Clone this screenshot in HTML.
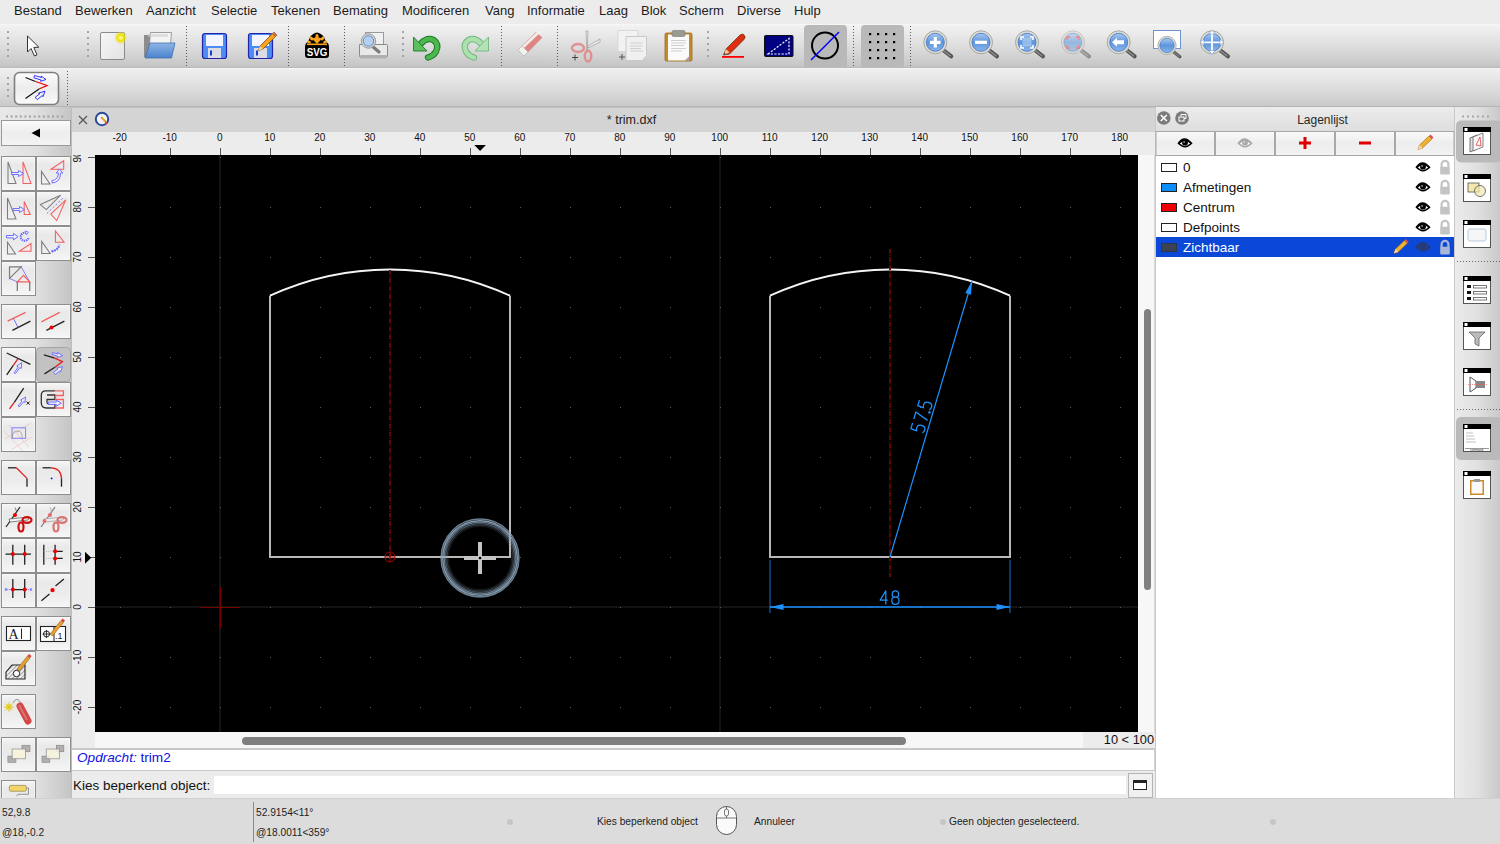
<!DOCTYPE html>
<html><head><meta charset="utf-8">
<style>
*{margin:0;padding:0;box-sizing:border-box}
html,body{width:1500px;height:844px;overflow:hidden;background:#e6e6e6;font-family:"Liberation Sans",sans-serif;color:#222}
.a{position:absolute}
#menu{left:0;top:0;width:1500px;height:24px;background:#ececec}
#menu span{position:absolute;top:3px;font-size:13px;color:#1c1c1c;line-height:16px}
#tb1{left:0;top:24px;width:1500px;height:44px;background:linear-gradient(#f2f2f2,#e6e6e6 30%,#d2d2d2 75%,#c4c4c4);border-top:1px solid #f6f6f6;border-bottom:1px solid #b9b9b9}
#tb2{left:0;top:68px;width:1500px;height:39px;background:linear-gradient(#efefef,#e5e5e5 30%,#d4d4d4 75%,#c9c9c9);border-top:1px solid #f5f5f5;border-bottom:1px solid #b4b4b4}
#left{left:0;top:107px;width:71px;height:691px;background:linear-gradient(90deg,#e9e9e9,#e0e0e0 50%,#c5c5c5)}
#leftedge{left:71px;top:107px;width:1px;height:691px;background:#bdbdbd}
#tabhdr{left:72px;top:107px;width:1083px;height:25px;background:#d4d4d4;border-top:1px solid #c2c2c2}
#rulert{left:72px;top:132px;width:1083px;height:23px;background:#ececec}
#rulerl{left:72px;top:155px;width:23px;height:593px;background:#ececec}
#canvas{left:95px;top:155px;width:1043px;height:577px;background:#000}
#vscroll{left:1138px;top:155px;width:17px;height:577px;background:#f7f7f7;border-right:1px solid #dadada}
#hscroll{left:95px;top:732px;width:988px;height:16px;background:#f7f7f7}
#zoomlbl{left:1083px;top:732px;width:72px;height:16px;background:#ececec;font-size:12.8px;text-align:right;padding-right:1px;line-height:16px;color:#111}
#cmdout{left:72px;top:748px;width:1083px;height:23px;background:#fff;border-top:2px solid #c8c8c8;border-bottom:1px solid #c8c8c8;border-right:1px solid #d0d0d0}
#cmdin{left:72px;top:771px;width:1083px;height:27px;background:#ececec}
#layers{left:1155px;top:107px;width:300px;height:691px;background:#fff;border-left:1px solid #cfcfcf;border-right:1px solid #cfcfcf}
#rdock{left:1455px;top:107px;width:45px;height:691px;background:linear-gradient(90deg,#e8e8e8,#dedede 50%,#cfcfcf)}
#status{left:0;top:798px;width:1500px;height:46px;background:#dcdcdc;border-top:1px solid #d0d0d0}
.st{position:absolute;font-size:10.2px;color:#1a1a1a;line-height:12px}
.btn{position:absolute;width:35px;height:35px;border:1px solid #a9a9a9;background:linear-gradient(#fafafa,#ececec 60%,#e2e2e2)}
.btn svg{position:absolute;left:0;top:0}
.sep{position:absolute;width:2px;border-left:1.5px dotted #555}
</style></head><body>

<div id="menu" class="a">
<span style="left:14px">Bestand</span><span style="left:75px">Bewerken</span><span style="left:146px">Aanzicht</span><span style="left:211px">Selectie</span><span style="left:271px">Tekenen</span><span style="left:333px">Bemating</span><span style="left:402px">Modificeren</span><span style="left:485px">Vang</span><span style="left:527px">Informatie</span><span style="left:599px">Laag</span><span style="left:641px">Blok</span><span style="left:679px">Scherm</span><span style="left:737px">Diverse</span><span style="left:794px">Hulp</span>
</div>

<div id="tb1" class="a"></div>
<div id="tb2" class="a"></div>
<svg class="a" style="left:0;top:24px" width="1500" height="83" viewBox="0 24 1500 83">
<defs>
<linearGradient id="mg" x1="0" y1="0" x2="0" y2="1"><stop offset="0" stop-color="#a9c8f0"/><stop offset="0.5" stop-color="#5d95dc"/><stop offset="1" stop-color="#8ab4ea"/></linearGradient>
<radialGradient id="yg"><stop offset="0" stop-color="#ffffb0"/><stop offset="0.5" stop-color="#f0e000"/><stop offset="1" stop-color="#f0e000" stop-opacity="0"/></radialGradient>
<linearGradient id="fl" x1="0" y1="0" x2="0" y2="1"><stop offset="0" stop-color="#8fb6e6"/><stop offset="1" stop-color="#4a82cc"/></linearGradient>
<linearGradient id="pg" x1="0" y1="0" x2="1" y2="1"><stop offset="0" stop-color="#f7f7f7"/><stop offset="1" stop-color="#e2e2e2"/></linearGradient>
</defs>
<rect x="7" y="31" width="2" height="2" fill="#a4a4a4"/><rect x="7" y="37" width="2" height="2" fill="#a4a4a4"/><rect x="7" y="43" width="2" height="2" fill="#a4a4a4"/><rect x="7" y="49" width="2" height="2" fill="#a4a4a4"/><rect x="7" y="55" width="2" height="2" fill="#a4a4a4"/>
<rect x="87" y="31" width="2" height="2" fill="#a4a4a4"/><rect x="87" y="37" width="2" height="2" fill="#a4a4a4"/><rect x="87" y="43" width="2" height="2" fill="#a4a4a4"/><rect x="87" y="49" width="2" height="2" fill="#a4a4a4"/><rect x="87" y="55" width="2" height="2" fill="#a4a4a4"/>
<line x1="186.5" y1="26" x2="186.5" y2="67" stroke="#5a5a5a" stroke-width="1" stroke-dasharray="1 2"/>
<line x1="288.5" y1="26" x2="288.5" y2="67" stroke="#5a5a5a" stroke-width="1" stroke-dasharray="1 2"/>
<line x1="344.5" y1="26" x2="344.5" y2="67" stroke="#5a5a5a" stroke-width="1" stroke-dasharray="1 2"/>
<rect x="402" y="31" width="2" height="2" fill="#a4a4a4"/><rect x="402" y="37" width="2" height="2" fill="#a4a4a4"/><rect x="402" y="43" width="2" height="2" fill="#a4a4a4"/><rect x="402" y="49" width="2" height="2" fill="#a4a4a4"/><rect x="402" y="55" width="2" height="2" fill="#a4a4a4"/>
<line x1="501.5" y1="26" x2="501.5" y2="67" stroke="#5a5a5a" stroke-width="1" stroke-dasharray="1 2"/>
<line x1="557.5" y1="26" x2="557.5" y2="67" stroke="#5a5a5a" stroke-width="1" stroke-dasharray="1 2"/>
<rect x="707" y="31" width="2" height="2" fill="#a4a4a4"/><rect x="707" y="37" width="2" height="2" fill="#a4a4a4"/><rect x="707" y="43" width="2" height="2" fill="#a4a4a4"/><rect x="707" y="49" width="2" height="2" fill="#a4a4a4"/><rect x="707" y="55" width="2" height="2" fill="#a4a4a4"/>
<line x1="853.5" y1="26" x2="853.5" y2="67" stroke="#5a5a5a" stroke-width="1" stroke-dasharray="1 2"/>
<line x1="910.5" y1="26" x2="910.5" y2="67" stroke="#5a5a5a" stroke-width="1" stroke-dasharray="1 2"/>
<path d="M27.5 36 L27.5 52 L31 48.5 L34.5 56 L37 54.8 L33.8 47.5 L38.8 47.2 Z" fill="#fff" stroke="#333" stroke-width="1" stroke-linejoin="round"/>
<rect x="100.5" y="32.5" width="24" height="27" rx="1.5" fill="url(#pg)" stroke="#8a8a8a"/>
<circle cx="120.7" cy="37.7" r="6.5" fill="url(#yg)"/>
<path d="M144 35 h7 l2 2 v20 h-9 z" fill="#8c8c8c"/>
<path d="M150.5 32.5 h21 l-1 12 h-21 z" fill="#f4f4f4" stroke="#888" stroke-width="0.8"/>
<path d="M148 34 h20 v3 h-20z" fill="#d0d0d0" opacity="0.6"/>
<path d="M150 43 h25 l-3.5 15 h-26.5 z" fill="url(#fl)" stroke="#3f6fb0" stroke-width="0.8"/>
<rect x="202.5" y="33.5" width="24" height="25" rx="2.5" fill="#4b8df5" stroke="#2424a8" stroke-width="1.2"/>
<rect x="206" y="35" width="17" height="11" fill="#f2f4ff"/>
<rect x="208" y="48" width="13" height="10" fill="#dcdce6"/>
<rect x="210" y="50.5" width="2" height="5" fill="#1a3fd0"/>
<rect x="248.5" y="33.5" width="24" height="25" rx="2.5" fill="#4b8df5" stroke="#2424a8" stroke-width="1.2"/>
<rect x="252" y="35" width="17" height="11" fill="#f2f4ff"/>
<rect x="254" y="48" width="13" height="10" fill="#dcdce6"/>
<rect x="256" y="50.5" width="2" height="5" fill="#1a3fd0"/>
<path d="M258.5 50.5 L260 46 L272.5 33.5 L275.5 36.5 L263 49 Z" fill="#f6a21a" stroke="#8a4a10" stroke-width="0.8"/><path d="M258.5 50.5 L260 46 L263 49Z" fill="#f4d8b0"/>
<path d="M272.5 33.5 l1.5 -1.5 l3 3 l-1.5 1.5z" fill="#e07070" stroke="#8a4a10" stroke-width="0.6"/>
<path d="M305 47 q0 -4 3 -5 l2 -5 q3 -4 7 -4.5 q4 0.5 7 4.5 l2 5 q3 1 3 5 v8 q0 3 -3 3 h-18 q-3 0 -3 -3z" fill="#000"/>
<g fill="#f9a21a"><ellipse cx="317" cy="36.5" rx="1.6" ry="2.4"/><ellipse cx="311.5" cy="38.5" rx="1.5" ry="2.2" transform="rotate(-40 311.5 38.5)"/><ellipse cx="322.5" cy="38.5" rx="1.5" ry="2.2" transform="rotate(40 322.5 38.5)"/><ellipse cx="309" cy="42" rx="1.4" ry="1.9" transform="rotate(-70 309 42)"/><ellipse cx="325" cy="42" rx="1.4" ry="1.9" transform="rotate(70 325 42)"/><rect x="307" y="43.5" width="20" height="1.6"/><path d="M317 44 L312 38.5 L317 37 L322 38.5z"/></g>
<text x="317" y="56.3" font-family="Liberation Sans" font-weight="bold" font-size="11.5" fill="#fff" text-anchor="middle" transform="translate(317 0) scale(0.85 1) translate(-317 0)">SVG</text>
<rect x="365.5" y="32.5" width="18" height="13" fill="#f0f0f0" stroke="#9a9a9a"/>
<path d="M359.5 44.5 h27 q1 0 1 1 v10 q0 2 -2 2 h-24 q-2 0 -2 -2 v-10 q0 -1 1 -1z" fill="#e9e9e9" stroke="#8a8a8a"/>
<rect x="360" y="55" width="27" height="3.5" rx="1" fill="#b0b0b0"/>
<line x1="372" y1="46" x2="379" y2="52" stroke="#7a7a7a" stroke-width="3.2" stroke-linecap="round"/>
<circle cx="368.5" cy="41" r="6.3" fill="#b5d0f0" stroke="#d8d8d8" stroke-width="2.2"/><circle cx="368.5" cy="41" r="7.2" fill="none" stroke="#8a8a8a" stroke-width="0.8"/><circle cx="368.5" cy="41" r="5.2" fill="none" stroke="#4a7ac0" stroke-width="0.8"/>
<path d="M421 43.5 Q427 37 433.5 40 Q439.5 44 436 51.5 Q433.5 56 428 57.5" fill="none" stroke="#1d7a2a" stroke-width="6.4" stroke-linecap="round"/>
<path d="M421 43.5 Q427 37 433.5 40 Q439.5 44 436 51.5 Q433.5 56 428 57.5" fill="none" stroke="#4cb84c" stroke-width="4.4" stroke-linecap="round"/>
<path d="M413.5 37 L413.5 51 L427 51 Z" fill="#5cc05c" stroke="#1d7a2a" stroke-width="0.9" stroke-linejoin="round"/>
<path d="M481 43.5 Q475 37 468.5 40 Q462.5 44 466 51.5 Q468.5 56 474 57.5" fill="none" stroke="#70b880" stroke-width="6.4" stroke-linecap="round"/>
<path d="M481 43.5 Q475 37 468.5 40 Q462.5 44 466 51.5 Q468.5 56 474 57.5" fill="none" stroke="#ace0ac" stroke-width="4.4" stroke-linecap="round"/>
<path d="M488.5 37 L488.5 51 L475 51 Z" fill="#b4e2b4" stroke="#70b880" stroke-width="0.9" stroke-linejoin="round"/>
<path d="M518 50 L536 32.5 L542 37.5 L524 56 Z" fill="#e07a7a" stroke="#c88" stroke-width="0.8" opacity="0.9"/>
<path d="M521 47 L539 30 L541 32 L523 49 Z" fill="#f4f4f4" opacity="0.9"/>
<path d="M518 50 L522 46 L528 52 L524 56Z" fill="#f2f2f2" stroke="#bbb" stroke-width="0.8"/>
<ellipse cx="530" cy="57" rx="12" ry="1.3" fill="#cfcfcf"/>
<g opacity="0.9"><path d="M586 31 l2 0 l-1 22z" fill="#f0f0f0" stroke="#888" stroke-width="0.6"/><path d="M588 46 l12 -7 l0 3 l-12 6z" fill="#f0f0f0" stroke="#888" stroke-width="0.6"/>
<ellipse cx="578" cy="48" rx="6" ry="4" fill="none" stroke="#e38a8a" stroke-width="2.5"/><ellipse cx="588" cy="56" rx="3.2" ry="5.5" fill="none" stroke="#e38a8a" stroke-width="2.5"/></g>
<path d="M572 57.5 h6 M575 54.5 v6" stroke="#444" stroke-width="1"/>
<path d="M618 30.5 h20 v21 h-20z" fill="#f2f2f2" stroke="#d8d8d8"/>
<path d="M626 36.5 h20.5 v19 l-4 5 h-16.5z" fill="#f0f0f0" stroke="#c8c8c8"/>
<g stroke="#d0d0d0" stroke-width="1"><path d="M630 43h13M630 46h13M630 48.5h11M630 51h13"/></g>
<path d="M619 57h6M622 54v6" stroke="#555" stroke-width="1"/>
<rect x="665" y="33" width="27" height="28" rx="1.5" fill="#c78a2a" stroke="#9a6a1a" stroke-width="0.8"/>
<path d="M668 34.5 h21 v22 l-4 4 h-17z" fill="#fafafa"/>
<rect x="672" y="30.5" width="13" height="6" rx="1.5" fill="#9a9a90" stroke="#777" stroke-width="0.6"/>
<g stroke="#cfcfcf" stroke-width="1"><path d="M671 40.5h15M671 43h15M671 45.5h13M671 48.5h15M671 51h11"/></g>
<path d="M685 60.5 l4 -4 v4z" fill="#aaa"/>
<path d="M723.5 55 L726 49 L740 35 Q743 33 744.5 35.5 Q746 37.5 743.5 40 L729.5 54 Z" fill="#e02c10" stroke="#6a3a10" stroke-width="0.8"/>
<path d="M723.5 55 L726 49 L729.5 52.5 Z" fill="#f0c8a0"/><path d="M723.5 55 l1 -2.2 l1.2 1.2z" fill="#222"/>
<rect x="722" y="56" width="22" height="1.8" fill="#f00"/>
<rect x="764.5" y="35.5" width="28.5" height="21" rx="1" fill="#000080" stroke="#111" stroke-width="1"/>
<path d="M768 54 L789 38.5 L789 54 Z" fill="none" stroke="#fff" stroke-width="1.2" stroke-dasharray="2.2 1.4"/>
<rect x="804" y="25" width="43" height="43" rx="4" fill="#b9b9b9"/>
<circle cx="825" cy="45.6" r="13" fill="none" stroke="#000" stroke-width="2"/>
<line x1="811" y1="60" x2="839" y2="32" stroke="#00f" stroke-width="1.4"/>
<rect x="861" y="25" width="43" height="43" rx="4" fill="#b9b9b9"/>
<rect x="869" y="33" width="2.2" height="2.2" fill="#000"/><rect x="869" y="41" width="2.2" height="2.2" fill="#000"/><rect x="869" y="49" width="2.2" height="2.2" fill="#000"/><rect x="869" y="57" width="2.2" height="2.2" fill="#000"/><rect x="877" y="33" width="2.2" height="2.2" fill="#000"/><rect x="877" y="41" width="2.2" height="2.2" fill="#000"/><rect x="877" y="49" width="2.2" height="2.2" fill="#000"/><rect x="877" y="57" width="2.2" height="2.2" fill="#000"/><rect x="885" y="33" width="2.2" height="2.2" fill="#000"/><rect x="885" y="41" width="2.2" height="2.2" fill="#000"/><rect x="885" y="49" width="2.2" height="2.2" fill="#000"/><rect x="885" y="57" width="2.2" height="2.2" fill="#000"/><rect x="893" y="33" width="2.2" height="2.2" fill="#000"/><rect x="893" y="41" width="2.2" height="2.2" fill="#000"/><rect x="893" y="49" width="2.2" height="2.2" fill="#000"/><rect x="893" y="57" width="2.2" height="2.2" fill="#000"/>
<g><line x1="942.3" y1="49.3" x2="951.3" y2="56.3" stroke="#555" stroke-width="4" stroke-linecap="round"/>
<line x1="943.3" y1="50.3" x2="950.3" y2="55.8" stroke="#888" stroke-width="1.5" stroke-linecap="round"/>
<circle cx="935.3" cy="42.3" r="11.5" fill="#dcdcd6" stroke="#a8a8a0" stroke-width="1"/>
<circle cx="935.3" cy="42.3" r="9" fill="url(#mg)" stroke="#3f74c4" stroke-width="0.8"/>
<path d="M930 42.3h10.6M935.3 37v10.6" stroke="#fff" stroke-width="3.2"/></g>
<g><line x1="988" y1="49.3" x2="997" y2="56.3" stroke="#555" stroke-width="4" stroke-linecap="round"/>
<line x1="989" y1="50.3" x2="996" y2="55.8" stroke="#888" stroke-width="1.5" stroke-linecap="round"/>
<circle cx="981" cy="42.3" r="11.5" fill="#dcdcd6" stroke="#a8a8a0" stroke-width="1"/>
<circle cx="981" cy="42.3" r="9" fill="url(#mg)" stroke="#3f74c4" stroke-width="0.8"/>
<path d="M975 42.3h12" stroke="#fff" stroke-width="3.2"/></g>
<g><line x1="1034" y1="49.3" x2="1043" y2="56.3" stroke="#555" stroke-width="4" stroke-linecap="round"/>
<line x1="1035" y1="50.3" x2="1042" y2="55.8" stroke="#888" stroke-width="1.5" stroke-linecap="round"/>
<circle cx="1027" cy="42.3" r="11.5" fill="#dcdcd6" stroke="#a8a8a0" stroke-width="1"/>
<circle cx="1027" cy="42.3" r="9" fill="url(#mg)" stroke="#3f74c4" stroke-width="0.8"/>
<rect x="1022.5" y="38" width="9" height="8.5" fill="#c8ddf6" opacity="0.5"/><path d="M1021 40v-3h3M1030 37h3v3M1033 45v3h-3M1024 48h-3v-3" fill="none" stroke="#fff" stroke-width="1.6"/></g>
<g opacity="0.55"><line x1="1079.9" y1="49.3" x2="1088.9" y2="56.3" stroke="#555" stroke-width="4" stroke-linecap="round"/>
<line x1="1080.9" y1="50.3" x2="1087.9" y2="55.8" stroke="#888" stroke-width="1.5" stroke-linecap="round"/>
<circle cx="1072.9" cy="42.3" r="11.5" fill="#dcdcd6" stroke="#a8a8a0" stroke-width="1"/>
<circle cx="1072.9" cy="42.3" r="9" fill="url(#mg)" stroke="#3f74c4" stroke-width="0.8"/>
<path d="M1067 40v-3h3M1076 37h3v3M1079 45v3h-3M1070 48h-3v-3" fill="none" stroke="#e85050" stroke-width="1.8"/></g>
<g><line x1="1125.7" y1="49.3" x2="1134.7" y2="56.3" stroke="#555" stroke-width="4" stroke-linecap="round"/>
<line x1="1126.7" y1="50.3" x2="1133.7" y2="55.8" stroke="#888" stroke-width="1.5" stroke-linecap="round"/>
<circle cx="1118.7" cy="42.3" r="11.5" fill="#dcdcd6" stroke="#a8a8a0" stroke-width="1"/>
<circle cx="1118.7" cy="42.3" r="9" fill="url(#mg)" stroke="#3f74c4" stroke-width="0.8"/>
<path d="M1112 42.3 l5 -4.5 v2.5 h7 v4 h-7 v2.5z" fill="#fff"/></g>
<rect x="1153.5" y="30.5" width="27" height="18" fill="#fff" stroke="#6f95cf"/>
<g transform="translate(1167 45.5) scale(0.8) translate(-1167 -45.5)"><line x1="1174" y1="52.5" x2="1183" y2="59.5" stroke="#555" stroke-width="4" stroke-linecap="round"/>
<line x1="1175" y1="53.5" x2="1182" y2="59.0" stroke="#888" stroke-width="1.5" stroke-linecap="round"/>
<circle cx="1167" cy="45.5" r="11.5" fill="#dcdcd6" stroke="#a8a8a0" stroke-width="1"/>
<circle cx="1167" cy="45.5" r="9" fill="url(#mg)" stroke="#3f74c4" stroke-width="0.8"/>
</g>
<g><line x1="1219" y1="49.3" x2="1228" y2="56.3" stroke="#555" stroke-width="4" stroke-linecap="round"/>
<line x1="1220" y1="50.3" x2="1227" y2="55.8" stroke="#888" stroke-width="1.5" stroke-linecap="round"/>
<circle cx="1212" cy="42.3" r="11.5" fill="#dcdcd6" stroke="#a8a8a0" stroke-width="1"/>
<circle cx="1212" cy="42.3" r="9" fill="url(#mg)" stroke="#3f74c4" stroke-width="0.8"/>
<path d="M1212 31v22M1201 42.3h22" stroke="#fff" stroke-width="1.8"/><path d="M1212 30l-3 4h6zM1212 54.5l-3-4h6zM1200 42.3l4-3v6zM1224 42.3l-4-3v6z" fill="#fff" stroke="#5d8ad0" stroke-width="0.5"/></g>
<rect x="7" y="77" width="2" height="2" fill="#a4a4a4"/><rect x="7" y="83" width="2" height="2" fill="#a4a4a4"/><rect x="7" y="89" width="2" height="2" fill="#a4a4a4"/><rect x="7" y="95" width="2" height="2" fill="#a4a4a4"/>
<rect x="14.5" y="72.5" width="44" height="32" rx="5" fill="url(#b2g)" stroke="#7f7f7f" stroke-width="1.6"/>
<defs><linearGradient id="b2g" x1="0" y1="0" x2="0" y2="1"><stop offset="0" stop-color="#fdfdfd"/><stop offset="0.5" stop-color="#ececec"/><stop offset="1" stop-color="#fafafa"/></linearGradient></defs>
<path d="M25.5 77.5 L35.5 81.5 M25.5 98.5 L39 89" stroke="#111" stroke-width="1.2"/><path d="M35.5 81.5 L47 85.5 L39 89" fill="none" stroke="#e00" stroke-width="1.3"/>
<path d="M34.5 75.5 l7 2 l-0.5 -1.5 l5 3.5 l-5.5 1.8 l0.4 -1.4 l-7 -2z M35 97.5 l5 -4 l-1.5 -0.3 l6.5 -2 l-2 5.5 l-0.6 -1.2 l-5 4z" fill="none" stroke="#2020ff" stroke-width="0.9"/>
<line x1="67.5" y1="71" x2="67.5" y2="105" stroke="#5a5a5a" stroke-width="1" stroke-dasharray="1 2"/>
</svg>
<div id="left" class="a"></div>
<div id="leftedge" class="a"></div>
<svg class="a" style="left:0;top:107px" width="72" height="691" viewBox="0 107 72 691">
<defs><linearGradient id="lbg" x1="0" y1="0" x2="0" y2="1"><stop offset="0" stop-color="#f6f6f6"/><stop offset="0.25" stop-color="#e9e9e9"/><stop offset="0.6" stop-color="#ececec"/><stop offset="1" stop-color="#f6f6f6"/></linearGradient>
<linearGradient id="bkg" x1="0" y1="0" x2="0" y2="1"><stop offset="0" stop-color="#fbfbfb"/><stop offset="0.5" stop-color="#ededed"/><stop offset="1" stop-color="#f4f4f4"/></linearGradient></defs>
<rect x="6" y="115.5" width="2" height="2" fill="#a0a0a0"/><rect x="10.6" y="115.5" width="2" height="2" fill="#a0a0a0"/><rect x="15.2" y="115.5" width="2" height="2" fill="#a0a0a0"/><rect x="19.799999999999997" y="115.5" width="2" height="2" fill="#a0a0a0"/><rect x="24.4" y="115.5" width="2" height="2" fill="#a0a0a0"/><rect x="29.0" y="115.5" width="2" height="2" fill="#a0a0a0"/><rect x="33.6" y="115.5" width="2" height="2" fill="#a0a0a0"/><rect x="38.2" y="115.5" width="2" height="2" fill="#a0a0a0"/><rect x="42.800000000000004" y="115.5" width="2" height="2" fill="#a0a0a0"/><rect x="47.400000000000006" y="115.5" width="2" height="2" fill="#a0a0a0"/><rect x="52.00000000000001" y="115.5" width="2" height="2" fill="#a0a0a0"/><rect x="56.60000000000001" y="115.5" width="2" height="2" fill="#a0a0a0"/><rect x="61.20000000000001" y="115.5" width="2" height="2" fill="#a0a0a0"/>
<rect x="1.5" y="120.5" width="69" height="25" fill="url(#bkg)" stroke="#9a9a9a"/>
<path d="M31.5 133 L40 128.5 V137.5 Z" fill="#000"/>
<rect x="1.5" y="156.5" width="34" height="34" fill="url(#lbg)" stroke="#8e8e8e" stroke-width="1"/><rect x="2.5" y="157.5" width="32" height="32" fill="none" stroke="#fbfbfb" stroke-width="0.8" opacity="0.7"/><g transform="translate(1 156)"><path d="M7 6 V27.5 H15 Z" fill="none" stroke="#7c7c7c" stroke-width="1.05"/><path d="M22 6 V27.5 H30 Z" fill="none" stroke="#f26060" stroke-width="1.05"/><path d="M10.5 16.5 h7 v-2 l5 3 l-5 3 v-2 h-7z" fill="#eef" stroke="#6464ff" stroke-width="0.9"/></g>
<rect x="36.5" y="156.5" width="34" height="34" fill="url(#lbg)" stroke="#8e8e8e" stroke-width="1"/><rect x="37.5" y="157.5" width="32" height="32" fill="none" stroke="#fbfbfb" stroke-width="0.8" opacity="0.7"/><g transform="translate(36 156)"><path d="M5.5 15.5 V28 H14 Z" fill="none" stroke="#7c7c7c" stroke-width="1.05"/><path d="M15 13.3 L27.7 4.7 V13.3 Z" fill="none" stroke="#f26060" stroke-width="1.05"/><path d="M16 24.5 Q22 24 22.5 17 h-2.3 l3.3 -4 l3.3 4 h-2.3 Q24.5 26.5 16 27z" fill="#eef" stroke="#6464ff" stroke-width="0.9"/></g>
<rect x="1.5" y="191.5" width="34" height="34" fill="url(#lbg)" stroke="#8e8e8e" stroke-width="1"/><rect x="2.5" y="192.5" width="32" height="32" fill="none" stroke="#fbfbfb" stroke-width="0.8" opacity="0.7"/><g transform="translate(1 191)"><path d="M6.5 7 V28 H15 Z" fill="none" stroke="#7c7c7c" stroke-width="1.05"/><path d="M23.2 10.5 V23.5 H29.3 Z" fill="none" stroke="#f26060" stroke-width="1.05"/><path d="M12 17.5 h6.5 v-2 l5 3 l-5 3 v-2 h-6.5z" fill="#eef" stroke="#6464ff" stroke-width="0.9"/></g>
<rect x="36.5" y="191.5" width="34" height="34" fill="url(#lbg)" stroke="#8e8e8e" stroke-width="1"/><rect x="37.5" y="192.5" width="32" height="32" fill="none" stroke="#fbfbfb" stroke-width="0.8" opacity="0.7"/><g transform="translate(36 191)"><path d="M4.4 13.6 L24.6 4.2 L10.3 18.6 Z" fill="none" stroke="#7c7c7c" stroke-width="1.05"/><path d="M29.8 8.8 L20.7 29.6 L14.8 23.1 Z" fill="none" stroke="#f26060" stroke-width="1.05"/><path d="M10.9 22.5 L27.9 6.2" stroke="#6464ff" stroke-width="0.9" stroke-dasharray="2 2"/></g>
<rect x="1.5" y="226.5" width="34" height="34" fill="url(#lbg)" stroke="#8e8e8e" stroke-width="1"/><rect x="2.5" y="227.5" width="32" height="32" fill="none" stroke="#fbfbfb" stroke-width="0.8" opacity="0.7"/><g transform="translate(1 226)"><path d="M6.5 16.2 V27.9 H14.5 Z" fill="none" stroke="#7c7c7c" stroke-width="1.05"/><path d="M18.3 25.3 L30 17.5 V25.3 Z" fill="none" stroke="#f26060" stroke-width="1.05"/><path d="M5.5 9.5 h7 v-2 l4.5 3.2 l-4.5 3.2 v-2 h-7z" fill="#eef" stroke="#6464ff" stroke-width="0.9"/><path d="M27.5 12 a4 4 0 1 1 -2.5 -5" fill="none" stroke="#6464ff" stroke-width="2" stroke-dasharray="1.4 0.8"/><path d="M24 5 l3.5 1 l-2 2.8z" fill="#eef" stroke="#6464ff" stroke-width="0.8"/></g>
<rect x="36.5" y="226.5" width="34" height="34" fill="url(#lbg)" stroke="#8e8e8e" stroke-width="1"/><rect x="37.5" y="227.5" width="32" height="32" fill="none" stroke="#fbfbfb" stroke-width="0.8" opacity="0.7"/><g transform="translate(36 226)"><path d="M5.7 15.5 V27.5 H14.2 Z" fill="none" stroke="#7c7c7c" stroke-width="1.05"/><path d="M19.4 5 V16.2 H28.1 Z" fill="none" stroke="#f26060" stroke-width="1.05"/><path d="M15.5 25.3 Q22 24.5 23.3 18.8" fill="none" stroke="#6464ff" stroke-width="2.2" stroke-dasharray="1.8 0.8"/></g>
<rect x="1.5" y="261.5" width="34" height="34" fill="url(#lbg)" stroke="#8e8e8e" stroke-width="1"/><rect x="2.5" y="262.5" width="32" height="32" fill="none" stroke="#fbfbfb" stroke-width="0.8" opacity="0.7"/><g transform="translate(1 261)"><path d="M8.5 5.9 H20.2 L8.5 17.4 Z" fill="none" stroke="#7c7c7c" stroke-width="1.2"/><path d="M20.2 5.9 L28.7 20.9 M8.5 17.4 L16.3 20.9" stroke="#6464ff" stroke-width="0.8"/><path d="M16.3 20.9 L22.5 14.4 L28.7 20.9 Z" fill="none" stroke="#f26060" stroke-width="1.3"/><path d="M16.3 20.9 V30 M28.7 20.9 V30" stroke="#7c7c7c" stroke-width="1.3"/></g>
<rect x="1.5" y="304.5" width="34" height="34" fill="url(#lbg)" stroke="#8e8e8e" stroke-width="1"/><rect x="2.5" y="305.5" width="32" height="32" fill="none" stroke="#fbfbfb" stroke-width="0.8" opacity="0.7"/><g transform="translate(1 304)"><path d="M6.6 17.2 L24.6 8.3" stroke="#f26060" stroke-width="1.3"/><path d="M11.4 26.3 L29.4 17.2" stroke="#222" stroke-width="1.3"/><path d="M12.3 14 L17 23.5" stroke="#6464ff" stroke-width="0.9"/></g>
<rect x="36.5" y="304.5" width="34" height="34" fill="url(#lbg)" stroke="#8e8e8e" stroke-width="1"/><rect x="37.5" y="305.5" width="32" height="32" fill="none" stroke="#fbfbfb" stroke-width="0.8" opacity="0.7"/><g transform="translate(36 304)"><path d="M5.3 17.8 L23.7 8.3" stroke="#f26060" stroke-width="1.3"/><path d="M10.4 26.3 L28.4 17.2" stroke="#222" stroke-width="1.3"/><circle cx="15.5" cy="23.5" r="2" fill="#e00"/></g>
<rect x="1.5" y="347.5" width="34" height="34" fill="url(#lbg)" stroke="#8e8e8e" stroke-width="1"/><rect x="2.5" y="348.5" width="32" height="32" fill="none" stroke="#fbfbfb" stroke-width="0.8" opacity="0.7"/><g transform="translate(1 347)"><path d="M5.7 6 L29.4 17.4 M5.7 27.8 L12.3 18.3" stroke="#222" stroke-width="1.3"/><path d="M12.3 18.3 L17 11.7" stroke="#e02020" stroke-width="1.3"/><path d="M13 26 l4.2 -6 l-1.4 -1 l5 -3.5 l-0.6 6 l-1.4 -1 l-4.2 6z" fill="#eef" stroke="#6464ff" stroke-width="0.9"/></g>
<rect x="36.5" y="347.5" width="34" height="34" rx="4" fill="#c2c2c2" stroke="#a5a5a5" stroke-width="1"/><g transform="translate(36 347)"><path d="M7.9 7.9 L18 10.8 M18.9 20.2 L8.5 26.9" stroke="#222" stroke-width="1.3"/><path d="M18 10.8 L26.5 14.6 L18.9 20.2" fill="none" stroke="#e02020" stroke-width="1.3"/><path d="M16.5 5.5 l5.5 1.6 l-0.3 -1.6 l4.8 3.2 l-5.3 1.8 l0.3 -1.5 l-5.5 -1.6z M17.5 25.5 l4.5 -3.5 l-1.2 -0.9 l5.7 -1.4 l-2 5.4 l-0.8 -1.2 l-4.5 3.5z" fill="#eef" stroke="#6464ff" stroke-width="0.9"/></g>
<rect x="1.5" y="382.5" width="34" height="34" fill="url(#lbg)" stroke="#8e8e8e" stroke-width="1"/><rect x="2.5" y="383.5" width="32" height="32" fill="none" stroke="#fbfbfb" stroke-width="0.8" opacity="0.7"/><g transform="translate(1 382)"><path d="M22.7 6.1 L13.3 20.3" stroke="#222" stroke-width="1.3"/><path d="M13.3 20.3 L8.5 26.9" stroke="#e02020" stroke-width="1.3"/><path d="M17 24 l4 -5 l-1.3 -1 l4.9 -3 l-0.6 5.5 l-1.2 -1 l-4 5z" fill="#eef" stroke="#6464ff" stroke-width="0.9"/><path d="M25.5 19.5 l3.2 3.2 M28.7 19.5 l-3.2 3.2" stroke="#222" stroke-width="1"/></g>
<rect x="36.5" y="382.5" width="34" height="34" fill="url(#lbg)" stroke="#8e8e8e" stroke-width="1"/><rect x="37.5" y="383.5" width="32" height="32" fill="none" stroke="#fbfbfb" stroke-width="0.8" opacity="0.7"/><g transform="translate(36 382)"><path d="M18.9 8.9 H10 Q5.3 8.9 5.3 13 V21 Q5.3 26 10.5 26 H18.9 V22 H13 Q11 22 11 20.5 V17.5 H18.9 V13 H11" fill="none" stroke="#333" stroke-width="1.3"/><path d="M18.9 8.9 H27.4 V13.5 H19.5 V17.5 H27.4 V26 H18.9" fill="none" stroke="#f26060" stroke-width="1.3"/><path d="M12.3 20 h8 v-1.8 l5 3 l-5 3 v-1.8 h-8z" fill="#eef" stroke="#6464ff" stroke-width="0.9"/></g>
<rect x="1.5" y="417.5" width="34" height="34" fill="url(#lbg)" stroke="#8e8e8e" stroke-width="1"/><rect x="2.5" y="418.5" width="32" height="32" fill="none" stroke="#fbfbfb" stroke-width="0.8" opacity="0.7"/><g transform="translate(1 417)"><g opacity="0.25"><path d="M4 22 L30 6 M8 8 L28 30 M3 14 L22 34 M10 33 L31 20" stroke="#f26060" stroke-width="0.9"/></g><rect x="11" y="10.8" width="13.6" height="10.5" fill="none" stroke="#8080ff" stroke-width="1"/><path d="M11.5 21 V19 Q11.5 14 17 14 Q20.5 14 21 18 V21" fill="none" stroke="#888" stroke-width="1" opacity="0.6"/></g>
<rect x="1.5" y="460.5" width="34" height="34" fill="url(#lbg)" stroke="#8e8e8e" stroke-width="1"/><rect x="2.5" y="461.5" width="32" height="32" fill="none" stroke="#fbfbfb" stroke-width="0.8" opacity="0.7"/><g transform="translate(1 460)"><path d="M7 7.8 H15.4" stroke="#222" stroke-width="1.3"/><path d="M15.4 7.8 L26 18.4" stroke="#e02020" stroke-width="1.3"/><path d="M26 18.4 V26.7" stroke="#222" stroke-width="1.3"/></g>
<rect x="36.5" y="460.5" width="34" height="34" fill="url(#lbg)" stroke="#8e8e8e" stroke-width="1"/><rect x="37.5" y="461.5" width="32" height="32" fill="none" stroke="#fbfbfb" stroke-width="0.8" opacity="0.7"/><g transform="translate(36 460)"><path d="M6.6 7.8 H14.9" stroke="#222" stroke-width="1.3"/><path d="M14.9 7.8 Q25 8 25.5 18.4" fill="none" stroke="#e02020" stroke-width="1.3"/><path d="M25.5 18.4 V26.7" stroke="#222" stroke-width="1.3"/><circle cx="15.6" cy="18.4" r="0.9" fill="#00f"/></g>
<rect x="1.5" y="503.5" width="34" height="34" fill="url(#lbg)" stroke="#8e8e8e" stroke-width="1"/><rect x="2.5" y="504.5" width="32" height="32" fill="none" stroke="#fbfbfb" stroke-width="0.8" opacity="0.7"/><g transform="translate(1 503)"><path d="M5 24 L19 4" stroke="#222" stroke-width="1.2"/><path d="M14 4.5 l1.5 4 M8 16 l20 -2 l-1 3 l-18 2z" fill="#f4f4f4" stroke="#555" stroke-width="0.7"/><ellipse cx="26" cy="17" rx="4.5" ry="2.8" fill="none" stroke="#cc1010" stroke-width="2.2"/><ellipse cx="20" cy="24" rx="2.5" ry="4.5" fill="none" stroke="#cc1010" stroke-width="2.2"/><circle cx="14" cy="12" r="2" fill="#e00"/></g>
<rect x="36.5" y="503.5" width="34" height="34" fill="url(#lbg)" stroke="#8e8e8e" stroke-width="1"/><rect x="37.5" y="504.5" width="32" height="32" fill="none" stroke="#fbfbfb" stroke-width="0.8" opacity="0.7"/><g transform="translate(36 503)"><g opacity="0.55"><path d="M5 24 L19 4" stroke="#222" stroke-width="1.2"/><path d="M14 4.5 l1.5 4 M8 16 l20 -2 l-1 3 l-18 2z" fill="#f4f4f4" stroke="#555" stroke-width="0.7"/><ellipse cx="26" cy="17" rx="4.5" ry="2.8" fill="none" stroke="#cc1010" stroke-width="2.2"/><ellipse cx="20" cy="24" rx="2.5" ry="4.5" fill="none" stroke="#cc1010" stroke-width="2.2"/><circle cx="14" cy="12" r="2" fill="#e00"/><circle cx="8.5" cy="18" r="2" fill="#e00"/></g></g>
<rect x="1.5" y="538.5" width="34" height="34" fill="url(#lbg)" stroke="#8e8e8e" stroke-width="1"/><rect x="2.5" y="539.5" width="32" height="32" fill="none" stroke="#fbfbfb" stroke-width="0.8" opacity="0.7"/><g transform="translate(1 538)"><path d="M11.8 6.7 V26.8 M23.7 6.7 V26.8 M4.5 16.1 H30" stroke="#222" stroke-width="1.3"/><circle cx="11.8" cy="16.1" r="2" fill="#e00"/><circle cx="23.7" cy="16.1" r="2" fill="#e00"/></g>
<rect x="36.5" y="538.5" width="34" height="34" fill="url(#lbg)" stroke="#8e8e8e" stroke-width="1"/><rect x="37.5" y="539.5" width="32" height="32" fill="none" stroke="#fbfbfb" stroke-width="0.8" opacity="0.7"/><g transform="translate(36 538)"><path d="M7.8 6.7 V26.8 M19.1 6.7 V26.8 M19.1 13.3 H26.7 M19.1 20.4 H26.7" stroke="#222" stroke-width="1.3"/><path d="M7.8 13.3 H19 M7.8 20.4 H19" stroke="#aaa" stroke-width="0.8" stroke-dasharray="1 1"/><circle cx="19.1" cy="13.3" r="2" fill="#e00"/><circle cx="19.1" cy="20.4" r="2" fill="#e00"/></g>
<rect x="1.5" y="573.5" width="34" height="34" fill="url(#lbg)" stroke="#8e8e8e" stroke-width="1"/><rect x="2.5" y="574.5" width="32" height="32" fill="none" stroke="#fbfbfb" stroke-width="0.8" opacity="0.7"/><g transform="translate(1 573)"><path d="M11.8 6 V25 M23.7 6 V25 M11.8 16.6 H23.7" stroke="#222" stroke-width="1.3"/><path d="M4 16.6 H11 M24.5 16.6 H31" stroke="#6a6aff" stroke-width="0.9" stroke-dasharray="1.2 1"/><path d="M4 15 l2 3 M6 15 l-2 3 M29 15 l2 3 M31 15 l-2 3" stroke="#6a6aff" stroke-width="0.7"/><circle cx="11.8" cy="16.6" r="2" fill="#e00"/><circle cx="23.7" cy="16.6" r="2" fill="#e00"/></g>
<rect x="36.5" y="573.5" width="34" height="34" fill="url(#lbg)" stroke="#8e8e8e" stroke-width="1"/><rect x="37.5" y="574.5" width="32" height="32" fill="none" stroke="#fbfbfb" stroke-width="0.8" opacity="0.7"/><g transform="translate(36 573)"><path d="M5.4 27.8 L13.5 21 M19.5 13 L27.9 6" stroke="#222" stroke-width="1.3"/><circle cx="16.5" cy="17.1" r="2.2" fill="#e00"/></g>
<rect x="1.5" y="616.5" width="34" height="34" fill="url(#lbg)" stroke="#8e8e8e" stroke-width="1"/><rect x="2.5" y="617.5" width="32" height="32" fill="none" stroke="#fbfbfb" stroke-width="0.8" opacity="0.7"/><g transform="translate(1 616)"><rect x="5.5" y="10.5" width="24" height="14" fill="#fff" stroke="#222" stroke-width="1.1"/><text x="7.5" y="23" font-family="Liberation Serif" font-size="14" fill="#222">A</text><path d="M20.5 12.5 V23" stroke="#222" stroke-width="1"/></g>
<rect x="36.5" y="616.5" width="34" height="34" fill="url(#lbg)" stroke="#8e8e8e" stroke-width="1"/><rect x="37.5" y="617.5" width="32" height="32" fill="none" stroke="#fbfbfb" stroke-width="0.8" opacity="0.7"/><g transform="translate(36 616)"><rect x="4.5" y="10.5" width="25" height="15" fill="#fff" stroke="#222" stroke-width="1.1"/><path d="M18 10.5 V25.5" stroke="#222" stroke-width="1"/><circle cx="10.5" cy="18" r="3" fill="none" stroke="#222" stroke-width="1"/><path d="M6.5 18 H14.5 M10.5 14 V22" stroke="#222" stroke-width="0.9"/><text x="19" y="23" font-family="Liberation Sans" font-size="9" fill="#222">.1</text><path d="M14 18 L25 4.5 l2.5 2 L16.5 20 Z" fill="#e8a030" stroke="#8a5a20" stroke-width="0.6"/><path d="M25 4.5 l1.5 -2 l2.5 2 l-1.5 2z" fill="#e04040"/></g>
<rect x="1.5" y="651.5" width="34" height="34" fill="url(#lbg)" stroke="#8e8e8e" stroke-width="1"/><rect x="2.5" y="652.5" width="32" height="32" fill="none" stroke="#fbfbfb" stroke-width="0.8" opacity="0.7"/><g transform="translate(1 651)"><defs><pattern id="hp" width="3" height="3" patternUnits="userSpaceOnUse" patternTransform="rotate(45)"><line x1="0" y1="0" x2="0" y2="3" stroke="#444" stroke-width="0.9"/></pattern></defs><path d="M5 21 L11 14 H24 V28 H5 Z" fill="url(#hp)" stroke="#222" stroke-width="1.1"/><circle cx="15.5" cy="22.5" r="3.2" fill="#fff" stroke="#222" stroke-width="1"/><path d="M16 18 L26.5 5 l2.5 2 L18.5 20 Z" fill="#e8a030" stroke="#8a5a20" stroke-width="0.6"/><path d="M26.5 5 l1.5 -2 l2.5 2 l-1.5 2z" fill="#e04040"/></g>
<rect x="1.5" y="694.5" width="34" height="34" fill="url(#lbg)" stroke="#8e8e8e" stroke-width="1"/><rect x="2.5" y="695.5" width="32" height="32" fill="none" stroke="#fbfbfb" stroke-width="0.8" opacity="0.7"/><g transform="translate(1 694)"><path d="M19 12 L27 27" stroke="#d04848" stroke-width="7" stroke-linecap="round"/><path d="M18 11 L26 26" stroke="#f08a8a" stroke-width="2" opacity="0.6"/><path d="M19 8 Q16 2 12 9" fill="none" stroke="#888" stroke-width="0.9"/><circle cx="8" cy="13" r="3" fill="#f0e040"/><path d="M3 13h10M8 8v10M4.5 9.5l7 7M11.5 9.5l-7 7" stroke="#e0c020" stroke-width="0.8"/></g>
<rect x="1.5" y="737.5" width="34" height="34" fill="url(#lbg)" stroke="#8e8e8e" stroke-width="1"/><rect x="2.5" y="738.5" width="32" height="32" fill="none" stroke="#fbfbfb" stroke-width="0.8" opacity="0.7"/><g transform="translate(1 737)"><rect x="21" y="8.3" width="7.9" height="6.4" fill="#b0b0b0" stroke="#8a8a8a" stroke-width="0.7"/><rect x="6.9" y="19.1" width="8" height="6.2" fill="#b0b0b0" stroke="#8a8a8a" stroke-width="0.7"/><rect x="11.1" y="12" width="13.3" height="9.8" fill="#f6f2dc" stroke="#8a8a8a" stroke-width="0.7"/></g>
<rect x="36.5" y="737.5" width="34" height="34" fill="url(#lbg)" stroke="#8e8e8e" stroke-width="1"/><rect x="37.5" y="738.5" width="32" height="32" fill="none" stroke="#fbfbfb" stroke-width="0.8" opacity="0.7"/><g transform="translate(36 737)"><rect x="20.4" y="8.3" width="7.4" height="6.4" fill="#b0b0b0" stroke="#8a8a8a" stroke-width="0.7"/><rect x="6" y="19.1" width="7.8" height="6.2" fill="#b0b0b0" stroke="#8a8a8a" stroke-width="0.7"/><rect x="10.2" y="12" width="13.2" height="9.8" fill="#f6f2dc" fill-opacity="0.85" stroke="#8a8a8a" stroke-width="0.7"/></g>
<rect x="1.5" y="780.5" width="34" height="34" fill="url(#lbg)" stroke="#8e8e8e" stroke-width="1"/><rect x="2.5" y="781.5" width="32" height="32" fill="none" stroke="#fbfbfb" stroke-width="0.8" opacity="0.7"/><g transform="translate(1 780)"><rect x="8.4" y="5.4" width="16.9" height="5.8" rx="1.5" fill="#f2d66a" stroke="#9a8a50" stroke-width="0.8"/><path d="M25.3 8 h2.2 v6.3 h-10.6 l-1.5 2" fill="none" stroke="#8a8a8a" stroke-width="0.9"/></g>
</svg>
<div id="tabhdr" class="a"></div>
<div id="rulert" class="a"></div>
<div id="rulerl" class="a"></div>
<svg class="a" style="left:72px;top:132px" width="1083" height="616" viewBox="72 132 1083 616">
<path stroke="#555" stroke-width="1" d="M120.5 148V155M170.5 148V155M220.5 148V155M270.5 148V155M320.5 148V155M370.5 148V155M420.5 148V155M470.5 148V155M520.5 148V155M570.5 148V155M620.5 148V155M670.5 148V155M720.5 148V155M770.5 148V155M820.5 148V155M870.5 148V155M920.5 148V155M970.5 148V155M1020.5 148V155M1070.5 148V155M1120.5 148V155M88 157.5H95M88 207.5H95M88 257.5H95M88 307.5H95M88 357.5H95M88 407.5H95M88 457.5H95M88 507.5H95M88 557.5H95M88 607.5H95M88 657.5H95M88 707.5H95"/>
<g font-family="Liberation Sans" font-size="10" fill="#111" text-anchor="middle">
<text x="119.7" y="141">-20</text>
<text x="169.7" y="141">-10</text>
<text x="219.7" y="141">0</text>
<text x="269.7" y="141">10</text>
<text x="319.7" y="141">20</text>
<text x="369.7" y="141">30</text>
<text x="419.7" y="141">40</text>
<text x="469.7" y="141">50</text>
<text x="519.7" y="141">60</text>
<text x="569.7" y="141">70</text>
<text x="619.7" y="141">80</text>
<text x="669.7" y="141">90</text>
<text x="719.7" y="141">100</text>
<text x="769.7" y="141">110</text>
<text x="819.7" y="141">120</text>
<text x="869.7" y="141">130</text>
<text x="919.7" y="141">140</text>
<text x="969.7" y="141">150</text>
<text x="1019.7" y="141">160</text>
<text x="1069.7" y="141">170</text>
<text x="1119.7" y="141">180</text>
</g><defs><clipPath id="lrc"><rect x="72" y="155" width="23" height="600"/></clipPath></defs><g clip-path="url(#lrc)" font-family="Liberation Sans" font-size="10" fill="#111" text-anchor="middle">
<text transform="translate(81 157) rotate(-90)" x="0" y="0">90</text>
<text transform="translate(81 207) rotate(-90)" x="0" y="0">80</text>
<text transform="translate(81 257) rotate(-90)" x="0" y="0">70</text>
<text transform="translate(81 307) rotate(-90)" x="0" y="0">60</text>
<text transform="translate(81 357) rotate(-90)" x="0" y="0">50</text>
<text transform="translate(81 407) rotate(-90)" x="0" y="0">40</text>
<text transform="translate(81 457) rotate(-90)" x="0" y="0">30</text>
<text transform="translate(81 507) rotate(-90)" x="0" y="0">20</text>
<text transform="translate(81 557) rotate(-90)" x="0" y="0">10</text>
<text transform="translate(81 607) rotate(-90)" x="0" y="0">0</text>
<text transform="translate(81 657) rotate(-90)" x="0" y="0">-10</text>
<text transform="translate(81 707) rotate(-90)" x="0" y="0">-20</text>
</g>
<path d="M474.3 145h11.6l-5.8 6z" fill="#000"/>
<path d="M85 551.8v12l6.2 -6z" fill="#000"/>
</svg>
<svg class="a" style="left:95px;top:155px" width="1043" height="577" viewBox="95 155 1043 577">
<rect x="95" y="155" width="1043" height="577" fill="#000"/>
<g stroke="#131313" stroke-width="2">
<line x1="220" y1="155" x2="220" y2="732"/>
<line x1="720" y1="155" x2="720" y2="732"/>
<line x1="95" y1="607" x2="1138" y2="607"/>
</g>
<path fill="#5a5a5a" d="M120 157h1v1h-1zM120 207h1v1h-1zM120 257h1v1h-1zM120 307h1v1h-1zM120 357h1v1h-1zM120 407h1v1h-1zM120 457h1v1h-1zM120 507h1v1h-1zM120 557h1v1h-1zM120 607h1v1h-1zM120 657h1v1h-1zM120 707h1v1h-1zM170 157h1v1h-1zM170 207h1v1h-1zM170 257h1v1h-1zM170 307h1v1h-1zM170 357h1v1h-1zM170 407h1v1h-1zM170 457h1v1h-1zM170 507h1v1h-1zM170 557h1v1h-1zM170 607h1v1h-1zM170 657h1v1h-1zM170 707h1v1h-1zM220 157h1v1h-1zM220 207h1v1h-1zM220 257h1v1h-1zM220 307h1v1h-1zM220 357h1v1h-1zM220 407h1v1h-1zM220 457h1v1h-1zM220 507h1v1h-1zM220 557h1v1h-1zM220 607h1v1h-1zM220 657h1v1h-1zM220 707h1v1h-1zM270 157h1v1h-1zM270 207h1v1h-1zM270 257h1v1h-1zM270 307h1v1h-1zM270 357h1v1h-1zM270 407h1v1h-1zM270 457h1v1h-1zM270 507h1v1h-1zM270 557h1v1h-1zM270 607h1v1h-1zM270 657h1v1h-1zM270 707h1v1h-1zM320 157h1v1h-1zM320 207h1v1h-1zM320 257h1v1h-1zM320 307h1v1h-1zM320 357h1v1h-1zM320 407h1v1h-1zM320 457h1v1h-1zM320 507h1v1h-1zM320 557h1v1h-1zM320 607h1v1h-1zM320 657h1v1h-1zM320 707h1v1h-1zM370 157h1v1h-1zM370 207h1v1h-1zM370 257h1v1h-1zM370 307h1v1h-1zM370 357h1v1h-1zM370 407h1v1h-1zM370 457h1v1h-1zM370 507h1v1h-1zM370 557h1v1h-1zM370 607h1v1h-1zM370 657h1v1h-1zM370 707h1v1h-1zM420 157h1v1h-1zM420 207h1v1h-1zM420 257h1v1h-1zM420 307h1v1h-1zM420 357h1v1h-1zM420 407h1v1h-1zM420 457h1v1h-1zM420 507h1v1h-1zM420 557h1v1h-1zM420 607h1v1h-1zM420 657h1v1h-1zM420 707h1v1h-1zM470 157h1v1h-1zM470 207h1v1h-1zM470 257h1v1h-1zM470 307h1v1h-1zM470 357h1v1h-1zM470 407h1v1h-1zM470 457h1v1h-1zM470 507h1v1h-1zM470 557h1v1h-1zM470 607h1v1h-1zM470 657h1v1h-1zM470 707h1v1h-1zM520 157h1v1h-1zM520 207h1v1h-1zM520 257h1v1h-1zM520 307h1v1h-1zM520 357h1v1h-1zM520 407h1v1h-1zM520 457h1v1h-1zM520 507h1v1h-1zM520 557h1v1h-1zM520 607h1v1h-1zM520 657h1v1h-1zM520 707h1v1h-1zM570 157h1v1h-1zM570 207h1v1h-1zM570 257h1v1h-1zM570 307h1v1h-1zM570 357h1v1h-1zM570 407h1v1h-1zM570 457h1v1h-1zM570 507h1v1h-1zM570 557h1v1h-1zM570 607h1v1h-1zM570 657h1v1h-1zM570 707h1v1h-1zM620 157h1v1h-1zM620 207h1v1h-1zM620 257h1v1h-1zM620 307h1v1h-1zM620 357h1v1h-1zM620 407h1v1h-1zM620 457h1v1h-1zM620 507h1v1h-1zM620 557h1v1h-1zM620 607h1v1h-1zM620 657h1v1h-1zM620 707h1v1h-1zM670 157h1v1h-1zM670 207h1v1h-1zM670 257h1v1h-1zM670 307h1v1h-1zM670 357h1v1h-1zM670 407h1v1h-1zM670 457h1v1h-1zM670 507h1v1h-1zM670 557h1v1h-1zM670 607h1v1h-1zM670 657h1v1h-1zM670 707h1v1h-1zM720 157h1v1h-1zM720 207h1v1h-1zM720 257h1v1h-1zM720 307h1v1h-1zM720 357h1v1h-1zM720 407h1v1h-1zM720 457h1v1h-1zM720 507h1v1h-1zM720 557h1v1h-1zM720 607h1v1h-1zM720 657h1v1h-1zM720 707h1v1h-1zM770 157h1v1h-1zM770 207h1v1h-1zM770 257h1v1h-1zM770 307h1v1h-1zM770 357h1v1h-1zM770 407h1v1h-1zM770 457h1v1h-1zM770 507h1v1h-1zM770 557h1v1h-1zM770 607h1v1h-1zM770 657h1v1h-1zM770 707h1v1h-1zM820 157h1v1h-1zM820 207h1v1h-1zM820 257h1v1h-1zM820 307h1v1h-1zM820 357h1v1h-1zM820 407h1v1h-1zM820 457h1v1h-1zM820 507h1v1h-1zM820 557h1v1h-1zM820 607h1v1h-1zM820 657h1v1h-1zM820 707h1v1h-1zM870 157h1v1h-1zM870 207h1v1h-1zM870 257h1v1h-1zM870 307h1v1h-1zM870 357h1v1h-1zM870 407h1v1h-1zM870 457h1v1h-1zM870 507h1v1h-1zM870 557h1v1h-1zM870 607h1v1h-1zM870 657h1v1h-1zM870 707h1v1h-1zM920 157h1v1h-1zM920 207h1v1h-1zM920 257h1v1h-1zM920 307h1v1h-1zM920 357h1v1h-1zM920 407h1v1h-1zM920 457h1v1h-1zM920 507h1v1h-1zM920 557h1v1h-1zM920 607h1v1h-1zM920 657h1v1h-1zM920 707h1v1h-1zM970 157h1v1h-1zM970 207h1v1h-1zM970 257h1v1h-1zM970 307h1v1h-1zM970 357h1v1h-1zM970 407h1v1h-1zM970 457h1v1h-1zM970 507h1v1h-1zM970 557h1v1h-1zM970 607h1v1h-1zM970 657h1v1h-1zM970 707h1v1h-1zM1020 157h1v1h-1zM1020 207h1v1h-1zM1020 257h1v1h-1zM1020 307h1v1h-1zM1020 357h1v1h-1zM1020 407h1v1h-1zM1020 457h1v1h-1zM1020 507h1v1h-1zM1020 557h1v1h-1zM1020 607h1v1h-1zM1020 657h1v1h-1zM1020 707h1v1h-1zM1070 157h1v1h-1zM1070 207h1v1h-1zM1070 257h1v1h-1zM1070 307h1v1h-1zM1070 357h1v1h-1zM1070 407h1v1h-1zM1070 457h1v1h-1zM1070 507h1v1h-1zM1070 557h1v1h-1zM1070 607h1v1h-1zM1070 657h1v1h-1zM1070 707h1v1h-1zM1120 157h1v1h-1zM1120 207h1v1h-1zM1120 257h1v1h-1zM1120 307h1v1h-1zM1120 357h1v1h-1zM1120 407h1v1h-1zM1120 457h1v1h-1zM1120 507h1v1h-1zM1120 557h1v1h-1zM1120 607h1v1h-1zM1120 657h1v1h-1zM1120 707h1v1h-1z"/>
<g stroke="#7a0000" stroke-width="1.2"><line x1="200" y1="607.5" x2="240" y2="607.5"/><line x1="220.5" y1="587" x2="220.5" y2="628"/></g>
<path d="M270 295.7 L270 557 L510 557 L510 295.7" fill="none" stroke="#b8b8b8" stroke-width="2"/>
<path d="M510 295.7 A287.5 287.5 0 0 0 270 295.7" fill="none" stroke="#f4f4f4" stroke-width="1.9"/>
<line x1="390" y1="270" x2="390" y2="557" stroke="#640707" stroke-width="1.9" stroke-dasharray="4.8 1.3 0.9 1.1"/>
<path d="M770 295.7 L770 557 L1010 557 L1010 295.7" fill="none" stroke="#b8b8b8" stroke-width="2"/>
<path d="M1010 295.7 A287.5 287.5 0 0 0 770 295.7" fill="none" stroke="#f4f4f4" stroke-width="1.9"/>
<line x1="890" y1="249" x2="890" y2="577" stroke="#640707" stroke-width="1.9" stroke-dasharray="4.8 1.3 0.9 1.1"/>
<circle cx="390" cy="557" r="5" fill="none" stroke="#b00000" stroke-width="1"/><path d="M385 557h10M390 552v10" stroke="#b00000" stroke-width="0.9"/>
<g stroke="#1060a8" stroke-width="1.2"><line x1="770" y1="560" x2="770" y2="613"/><line x1="1010" y1="560" x2="1010" y2="613"/></g>
<line x1="770" y1="607" x2="1010" y2="607" stroke="#1c92ff" stroke-width="1.3"/>
<path d="M770 607 l13.5 -3 v6z M1010 607 l-13.5 -3 v6z" fill="#1c92ff"/>
<line x1="890" y1="557" x2="972" y2="281" stroke="#1c92ff" stroke-width="1.2"/>
<path d="M972 281 L971.0 294.8 L965.3 293.1z" fill="#1c92ff"/>
<g transform="translate(880.20 590.8)" fill="none" stroke="#1c92ff" stroke-width="1.25" stroke-linejoin="round"><path transform="translate(0.00 0)" d="M5.6 13.6V0L0 9.3H7.6"/><path transform="translate(11.60 0)" d="M3.6 6.3C0.6 6.3 0.4 5.6 0.4 3.2S1 0 3.6 0S6.8 0.8 6.8 3.2S6.6 6.3 3.6 6.3C0 6.3 0 7.5 0 10S0.8 13.6 3.6 13.6S7.2 12.5 7.2 10S7 6.3 3.6 6.3Z"/></g>
<g transform="translate(931 419) rotate(-73.45) translate(-15.90 -16.5)" fill="none" stroke="#1c92ff" stroke-width="1.25" stroke-linejoin="round"><path transform="translate(0.00 0)" d="M6.8 0H0.9L0.5 6.2Q1.8 5.3 3.6 5.3Q7.2 5.3 7.2 9.3Q7.2 13.6 3.6 13.6Q1.2 13.6 0.2 12.2"/><path transform="translate(11.00 0)" d="M0 0H7.2L2.6 13.6"/><path transform="translate(20.60 0)" d="M0.6 12.6h1.2v1h-1.2z"/><path transform="translate(24.00 0)" d="M6.8 0H0.9L0.5 6.2Q1.8 5.3 3.6 5.3Q7.2 5.3 7.2 9.3Q7.2 13.6 3.6 13.6Q1.2 13.6 0.2 12.2"/></g>
<circle cx="480" cy="558" r="38.9" fill="none" stroke="#8aa2b8" stroke-opacity="0.8" stroke-width="1.5"/><circle cx="480" cy="558" r="37.3" fill="none" stroke="#8aa2b8" stroke-opacity="0.95" stroke-width="1.5"/><circle cx="480" cy="558" r="35.8" fill="none" stroke="#8aa2b8" stroke-opacity="0.75" stroke-width="1.3"/><circle cx="480" cy="558" r="34.4" fill="none" stroke="#8aa2b8" stroke-opacity="0.55" stroke-width="1.2"/><circle cx="480" cy="558" r="33.0" fill="none" stroke="#8aa2b8" stroke-opacity="0.35" stroke-width="1.1"/><circle cx="480" cy="558" r="31.7" fill="none" stroke="#8aa2b8" stroke-opacity="0.18" stroke-width="1.0"/>
<g fill="#c4c4c4"><rect x="478" y="542" width="4" height="32"/><rect x="464" y="556" width="32" height="4"/></g><circle cx="480" cy="558" r="1.3" fill="#000"/>
</svg>
<div id="vscroll" class="a"></div>
<div id="hscroll" class="a"></div>
<div id="zoomlbl" class="a">10 &lt; 100</div>
<div id="cmdout" class="a"></div>
<div id="cmdin" class="a"></div>
<svg class="a" style="left:72px;top:107px" width="1083" height="25" viewBox="72 107 1083 25">
<path d="M79 116 l8 8 M87 116 l-8 8" stroke="#555" stroke-width="1.2"/>
<circle cx="102" cy="119" r="6.2" fill="#f4f4f4" stroke="#2a4a9a" stroke-width="2"/><path d="M101 117 l5 5" stroke="#e0a020" stroke-width="1.8"/><circle cx="106" cy="123" r="1.2" fill="#e04040"/>
<text x="631.5" y="124" font-family="Liberation Sans" font-size="12.5" fill="#1e1e1e" text-anchor="middle">* trim.dxf</text>
</svg>
<div class="a" style="left:242px;top:737px;width:664px;height:8px;border-radius:4px;background:#7f7f7f"></div>
<div class="a" style="left:1143.5px;top:308.5px;width:7px;height:281px;border-radius:3.5px;background:#808080"></div>
<div class="a" style="left:77px;top:750px;font-size:13.6px;line-height:16px;color:#1010e0"><i>Opdracht:</i> trim2</div>
<div class="a" style="left:73px;top:778px;font-size:13.5px;line-height:16px;color:#111">Kies beperkend object:</div>
<div class="a" style="left:214px;top:776px;width:912px;height:18px;background:#fff"></div>
<div class="a" style="left:1127.5px;top:772.5px;width:25px;height:25px;border:1px solid #b4b4b4;background:#f0f0f0"></div>
<svg class="a" style="left:1127px;top:772px" width="26" height="26" viewBox="1127 772 26 26"><rect x="1133.5" y="780.5" width="13" height="9" fill="#fff" stroke="#222" stroke-width="1"/><rect x="1133" y="780" width="14" height="3" fill="#222"/></svg>
<svg class="a" style="left:1155px;top:107px" width="300" height="691" viewBox="1155 107 300 691">
<defs><linearGradient id="ltg" x1="0" y1="0" x2="0" y2="1"><stop offset="0" stop-color="#ececec"/><stop offset="1" stop-color="#dedede"/></linearGradient><linearGradient id="lbt" x1="0" y1="0" x2="0" y2="1"><stop offset="0" stop-color="#fafafa"/><stop offset="0.5" stop-color="#ededed"/><stop offset="1" stop-color="#f3f3f3"/></linearGradient></defs>
<rect x="1155" y="107" width="300" height="691" fill="#fff"/>
<rect x="1155" y="107" width="300" height="24" fill="url(#ltg)"/>
<line x1="1155.5" y1="107" x2="1155.5" y2="798" stroke="#c8c8c8"/><line x1="1454.5" y1="107" x2="1454.5" y2="798" stroke="#c8c8c8"/>
<circle cx="1163.8" cy="118" r="6.8" fill="#7b7b7b"/><path d="M1160.8 115 l6 6 M1166.8 115 l-6 6" stroke="#fff" stroke-width="1.6"/>
<circle cx="1182" cy="118" r="6.8" fill="#7b7b7b"/><rect x="1179" y="117" width="5" height="4" fill="none" stroke="#fff" stroke-width="1"/><path d="M1181 116.5 v-2 h5 v4 h-2" fill="none" stroke="#fff" stroke-width="1"/>
<text x="1322.5" y="123.5" font-family="Liberation Sans" font-size="12" fill="#262626" text-anchor="middle">Lagenlijst</text>
<rect x="1156.0" y="131.5" width="58.5" height="24" fill="url(#lbt)" stroke="#a8a8a8" stroke-width="1"/>
<rect x="1215.5" y="131.5" width="59" height="24" fill="url(#lbt)" stroke="#a8a8a8" stroke-width="1"/>
<rect x="1275.5" y="131.5" width="59" height="24" fill="url(#lbt)" stroke="#a8a8a8" stroke-width="1"/>
<rect x="1335.5" y="131.5" width="59" height="24" fill="url(#lbt)" stroke="#a8a8a8" stroke-width="1"/>
<rect x="1395.5" y="131.5" width="58.5" height="24" fill="url(#lbt)" stroke="#a8a8a8" stroke-width="1"/>
<g opacity="1"><path d="M1177.4 143.3 Q1184 133 1192.6 143.3 Q1185 151.6 1177.4 143.3Z" fill="#000"/><path d="M1179.8 143.6 Q1185 139 1190.2 143.6 Q1185 148.4 1179.8 143.6Z" fill="#fff"/><circle cx="1185" cy="142.7" r="2.9" fill="#000"/><circle cx="1184.1" cy="142" r="0.7" fill="#fff"/></g>
<g opacity="1"><path d="M1237.4 143.3 Q1244 133 1252.6 143.3 Q1245 151.6 1237.4 143.3Z" fill="#a8a8a8"/><path d="M1239.8 143.6 Q1245 139 1250.2 143.6 Q1245 148.4 1239.8 143.6Z" fill="#fff"/><circle cx="1245" cy="142.7" r="2.9" fill="#a8a8a8"/><circle cx="1244.1" cy="142" r="0.7" fill="#fff"/></g>
<path d="M1299 143 h12 M1305 137 v12" stroke="#e00000" stroke-width="3"/>
<path d="M1359 143 h12" stroke="#e00000" stroke-width="3"/>
<g transform="translate(1418 135.5) scale(1.0)"><path d="M0 14 L1.5 9.5 L11 0.5 L14 3.5 L4.5 12.5 Z" fill="#f0b030" stroke="#9a6a20" stroke-width="0.6"/><path d="M11 0.5 L12.5 -1 L15.5 2 L14 3.5Z" fill="#e05050"/><path d="M0 14 L1.5 9.5 L4.5 12.5Z" fill="#f2d8b0"/></g>
<rect x="1161.5" y="163.5" width="15" height="8" fill="#fff" stroke="#222" stroke-width="1"/>
<text x="1183" y="172" font-family="Liberation Sans" font-size="13.5" fill="#111">0</text>
<g opacity="1"><path d="M1415.4 167.3 Q1422 157 1430.6 167.3 Q1423 175.6 1415.4 167.3Z" fill="#000"/><path d="M1417.8 167.6 Q1423 163 1428.2 167.6 Q1423 172.4 1417.8 167.6Z" fill="#fff"/><circle cx="1423" cy="166.7" r="2.9" fill="#000"/><circle cx="1422.1" cy="166" r="0.7" fill="#fff"/></g>
<path d="M1441.6 167 v-2.8 a3.4 3.4 0 0 1 6.8 0 v2.8" fill="none" stroke="#c4c4c4" stroke-width="2.2"/><rect x="1440.2" y="166.8" width="9.6" height="7.6" rx="0.8" fill="#c4c4c4"/>
<rect x="1161.5" y="183.5" width="15" height="8" fill="#0a8cff" stroke="#222" stroke-width="1"/>
<text x="1183" y="192" font-family="Liberation Sans" font-size="13.5" fill="#111">Afmetingen</text>
<g opacity="1"><path d="M1415.4 187.3 Q1422 177 1430.6 187.3 Q1423 195.6 1415.4 187.3Z" fill="#000"/><path d="M1417.8 187.6 Q1423 183 1428.2 187.6 Q1423 192.4 1417.8 187.6Z" fill="#fff"/><circle cx="1423" cy="186.7" r="2.9" fill="#000"/><circle cx="1422.1" cy="186" r="0.7" fill="#fff"/></g>
<path d="M1441.6 187 v-2.8 a3.4 3.4 0 0 1 6.8 0 v2.8" fill="none" stroke="#c4c4c4" stroke-width="2.2"/><rect x="1440.2" y="186.8" width="9.6" height="7.6" rx="0.8" fill="#c4c4c4"/>
<rect x="1161.5" y="203.5" width="15" height="8" fill="#f00000" stroke="#222" stroke-width="1"/>
<text x="1183" y="212" font-family="Liberation Sans" font-size="13.5" fill="#111">Centrum</text>
<g opacity="1"><path d="M1415.4 207.3 Q1422 197 1430.6 207.3 Q1423 215.6 1415.4 207.3Z" fill="#000"/><path d="M1417.8 207.6 Q1423 203 1428.2 207.6 Q1423 212.4 1417.8 207.6Z" fill="#fff"/><circle cx="1423" cy="206.7" r="2.9" fill="#000"/><circle cx="1422.1" cy="206" r="0.7" fill="#fff"/></g>
<path d="M1441.6 207 v-2.8 a3.4 3.4 0 0 1 6.8 0 v2.8" fill="none" stroke="#c4c4c4" stroke-width="2.2"/><rect x="1440.2" y="206.8" width="9.6" height="7.6" rx="0.8" fill="#c4c4c4"/>
<rect x="1161.5" y="223.5" width="15" height="8" fill="#fff" stroke="#222" stroke-width="1"/>
<text x="1183" y="232" font-family="Liberation Sans" font-size="13.5" fill="#111">Defpoints</text>
<g opacity="1"><path d="M1415.4 227.3 Q1422 217 1430.6 227.3 Q1423 235.6 1415.4 227.3Z" fill="#000"/><path d="M1417.8 227.6 Q1423 223 1428.2 227.6 Q1423 232.4 1417.8 227.6Z" fill="#fff"/><circle cx="1423" cy="226.7" r="2.9" fill="#000"/><circle cx="1422.1" cy="226" r="0.7" fill="#fff"/></g>
<path d="M1441.6 227 v-2.8 a3.4 3.4 0 0 1 6.8 0 v2.8" fill="none" stroke="#c4c4c4" stroke-width="2.2"/><rect x="1440.2" y="226.8" width="9.6" height="7.6" rx="0.8" fill="#c4c4c4"/>
<rect x="1156" y="237" width="298" height="20" fill="#0b48d8"/>
<rect x="1161.5" y="243.5" width="15" height="8" fill="#3c4250" stroke="#2a3550" stroke-width="1"/>
<text x="1183" y="252" font-family="Liberation Sans" font-size="13.5" fill="#fff">Zichtbaar</text>
<g transform="translate(1394 240) scale(0.95)"><path d="M0 14 L1.5 9.5 L11 0.5 L14 3.5 L4.5 12.5 Z" fill="#f0b030" stroke="#9a6a20" stroke-width="0.6"/><path d="M11 0.5 L12.5 -1 L15.5 2 L14 3.5Z" fill="#e05050"/><path d="M0 14 L1.5 9.5 L4.5 12.5Z" fill="#f2d8b0"/></g>
<g opacity="1"><path d="M1415.4 247.3 Q1422 237 1430.6 247.3 Q1423 255.6 1415.4 247.3Z" fill="#2a3a6e"/><path d="M1417.8 247.6 Q1423 243 1428.2 247.6 Q1423 252.4 1417.8 247.6Z" fill="#1a44b0"/><circle cx="1423" cy="246.7" r="2.9" fill="#2a3a6e"/><circle cx="1422.1" cy="246" r="0.7" fill="#1a44b0"/></g>
<path d="M1441.6 247 v-2.8 a3.4 3.4 0 0 1 6.8 0 v2.8" fill="none" stroke="#a9b7d6" stroke-width="2.2"/><rect x="1440.2" y="246.8" width="9.6" height="7.6" rx="0.8" fill="#a9b7d6"/>
</svg>
<svg class="a" style="left:1455px;top:107px" width="45" height="691" viewBox="1455 107 45 691">
<defs><linearGradient id="rdg" x1="0" y1="0" x2="1" y2="0"><stop offset="0" stop-color="#ebebeb"/><stop offset="0.5" stop-color="#e0e0e0"/><stop offset="1" stop-color="#c9c9c9"/></linearGradient></defs>
<rect x="1455" y="107" width="45" height="691" fill="url(#rdg)"/>
<rect x="1462" y="115.5" width="2" height="2" fill="#a8a8a8"/><rect x="1467" y="115.5" width="2" height="2" fill="#a8a8a8"/><rect x="1472" y="115.5" width="2" height="2" fill="#a8a8a8"/><rect x="1477" y="115.5" width="2" height="2" fill="#a8a8a8"/><rect x="1482" y="115.5" width="2" height="2" fill="#a8a8a8"/><rect x="1487" y="115.5" width="2" height="2" fill="#a8a8a8"/>
<rect x="1456" y="120.5" width="46" height="42" rx="5" fill="#bababa"/>
<rect x="1456" y="417" width="46" height="43" rx="5" fill="#bababa"/>
<line x1="1457" y1="261.5" x2="1500" y2="261.5" stroke="#666" stroke-dasharray="1 2"/>
<line x1="1457" y1="409.5" x2="1500" y2="409.5" stroke="#666" stroke-dasharray="1 2"/>
<rect x="1463.5" y="127.5" width="27" height="27" fill="#fff" stroke="#555" stroke-width="1"/><rect x="1463" y="127" width="28" height="5" fill="#000"/><rect x="1464.5" y="128" width="3" height="3" fill="#fff"/><g transform="translate(1463 127)"><path d="M7 11 l7 -3 v14 l-7 3z" fill="#ddd" stroke="#555" stroke-width="0.8"/><path d="M10 10 l10 -4 v14 l-10 4z" fill="#f6f6f6" stroke="#666" stroke-width="0.8"/><path d="M13 18 l4 -8 l1 9z" fill="none" stroke="#e04040" stroke-width="0.8"/></g>
<rect x="1463.5" y="174.5" width="27" height="27" fill="#fff" stroke="#555" stroke-width="1"/><rect x="1463" y="174" width="28" height="5" fill="#000"/><rect x="1464.5" y="175" width="3" height="3" fill="#fff"/><g transform="translate(1463 174)"><rect x="5" y="9" width="11" height="9" fill="#f4e8b0" stroke="#555" stroke-width="0.8"/><circle cx="17" cy="17" r="5.5" fill="#f4e8b0" fill-opacity="0.7" stroke="#555" stroke-width="0.8"/></g>
<rect x="1463.5" y="220.5" width="27" height="27" fill="#fff" stroke="#555" stroke-width="1"/><rect x="1463" y="220" width="28" height="5" fill="#000"/><rect x="1464.5" y="221" width="3" height="3" fill="#fff"/><g transform="translate(1463 220)"><rect x="5" y="9" width="18" height="12" rx="2" fill="#f6f6f6" stroke="#b8cce0" stroke-width="1"/></g>
<rect x="1463.5" y="276.5" width="27" height="27" fill="#fff" stroke="#555" stroke-width="1"/><rect x="1463" y="276" width="28" height="5" fill="#000"/><rect x="1464.5" y="277" width="3" height="3" fill="#fff"/><g transform="translate(1463 276)"><g fill="#111"><rect x="4" y="9" width="4" height="3"/><rect x="4" y="15" width="4" height="3"/><rect x="4" y="21" width="4" height="3"/></g><g fill="none" stroke="#555" stroke-width="0.8"><rect x="10.5" y="9.5" width="13" height="2.5"/><rect x="10.5" y="15.5" width="13" height="2.5"/><rect x="10.5" y="21.5" width="13" height="2.5"/></g></g>
<rect x="1463.5" y="322.5" width="27" height="27" fill="#fff" stroke="#555" stroke-width="1"/><rect x="1463" y="322" width="28" height="5" fill="#000"/><rect x="1464.5" y="323" width="3" height="3" fill="#fff"/><g transform="translate(1463 322)"><path d="M6 10 h16 l-6 6 v8 l-4 -2 v-6z" fill="#bbb" stroke="#666" stroke-width="0.8"/></g>
<rect x="1463.5" y="368.5" width="27" height="27" fill="#fff" stroke="#555" stroke-width="1"/><rect x="1463" y="368" width="28" height="5" fill="#000"/><rect x="1464.5" y="369" width="3" height="3" fill="#fff"/><g transform="translate(1463 368)"><path d="M7 9 v15 l6 -4 v-7z" fill="none" stroke="#444" stroke-width="0.9"/><rect x="13" y="13" width="9" height="7" fill="#888"/><path d="M5 16.5 h19" stroke="#e06060" stroke-width="0.7" stroke-dasharray="1 1"/></g>
<rect x="1463.5" y="424.5" width="27" height="27" fill="#fff" stroke="#555" stroke-width="1"/><rect x="1463" y="424" width="28" height="5" fill="#000"/><rect x="1464.5" y="425" width="3" height="3" fill="#fff"/><g transform="translate(1463 424)"><g stroke="#999" stroke-width="0.6"><path d="M3 9h7M3 12h8M3 15h9M3 18h10"/></g><path d="M2 24.5h24" stroke="#555" stroke-width="0.6"/><text x="7" y="27.3" font-size="3" font-family="Liberation Sans" fill="#333">command</text></g>
<rect x="1463.5" y="471.5" width="27" height="27" fill="#fff" stroke="#555" stroke-width="1"/><rect x="1463" y="471" width="28" height="5" fill="#000"/><rect x="1464.5" y="472" width="3" height="3" fill="#fff"/><g transform="translate(1463 471)"><rect x="7" y="9" width="14" height="15" fill="#c98a2a"/><rect x="8.5" y="10.5" width="11" height="12" fill="#fafafa"/><rect x="11" y="8" width="6" height="3" fill="#999"/></g>
</svg>
<div id="status" class="a"></div>
<div class="a" style="left:2px;top:807px;font-size:10.2px;line-height:12px;color:#1c1c1c">52,9.8</div>
<div class="a" style="left:2px;top:827px;font-size:10.2px;line-height:12px;color:#1c1c1c">@18,-0.2</div>
<div class="a" style="left:253px;top:802px;width:1px;height:40px;background:#8a8a8a"></div>
<div class="a" style="left:256px;top:807px;font-size:10.2px;line-height:12px;color:#1c1c1c">52.9154&lt;11°</div>
<div class="a" style="left:256px;top:827px;font-size:10.2px;line-height:12px;color:#1c1c1c">@18.0011&lt;359°</div>
<div class="a" style="left:506.5px;top:818.5px;width:6px;height:6px;border-radius:3px;background:#c6c6c6"></div>
<div class="a" style="left:597px;top:816px;font-size:10.2px;line-height:12px;color:#1c1c1c">Kies beperkend object</div>
<svg class="a" style="left:712px;top:804px" width="30" height="36" viewBox="712 804 30 36"><rect x="716.5" y="806.5" width="20" height="28" rx="10" fill="#fafafa" stroke="#555" stroke-width="1"/><path d="M716.5 818 h20 M726.5 806.5 v11.5" stroke="#555" stroke-width="0.8"/><rect x="724.5" y="809" width="4" height="7" rx="2" fill="#fff" stroke="#555" stroke-width="0.8"/></svg>
<div class="a" style="left:754px;top:816px;font-size:10.2px;line-height:12px;color:#1c1c1c">Annuleer</div>
<div class="a" style="left:939.5px;top:818.5px;width:6px;height:6px;border-radius:3px;background:#c6c6c6"></div>
<div class="a" style="left:949px;top:816px;font-size:10.2px;line-height:12px;color:#1c1c1c">Geen objecten geselecteerd.</div>
<div class="a" style="left:1269.5px;top:818.5px;width:6px;height:6px;border-radius:3px;background:#c6c6c6"></div>

</body></html>
